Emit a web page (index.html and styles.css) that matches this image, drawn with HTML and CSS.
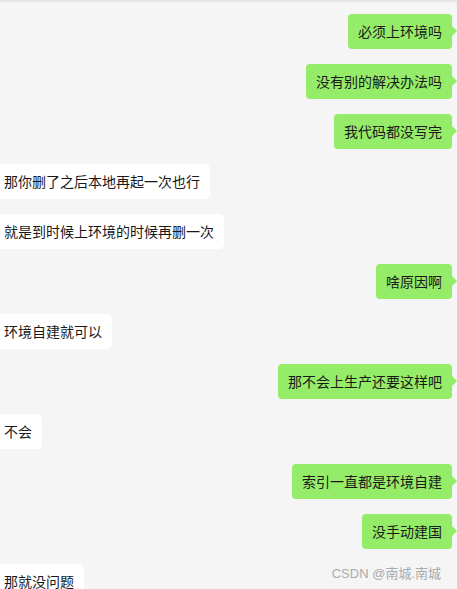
FILE: index.html
```html
<!DOCTYPE html>
<html lang="zh-CN">
<head>
    <meta charset="UTF-8">
    <meta name="viewport" content="width=device-width, initial-scale=1.0">
    <title>聊天记录</title>
    <link rel="stylesheet" href="styles.css">
</head>
<body>
    <div class="chat">
        <div class="msg me"><span class="bubble">必须上环境吗</span></div>
        <div class="msg me"><span class="bubble">没有别的解决办法吗</span></div>
        <div class="msg me"><span class="bubble">我代码都没写完</span></div>
        <div class="msg other"><span class="bubble">那你删了之后本地再起一次也行</span></div>
        <div class="msg other"><span class="bubble">就是到时候上环境的时候再删一次</span></div>
        <div class="msg me"><span class="bubble">啥原因啊</span></div>
        <div class="msg other"><span class="bubble">环境自建就可以</span></div>
        <div class="msg me"><span class="bubble">那不会上生产还要这样吧</span></div>
        <div class="msg other"><span class="bubble">不会</span></div>
        <div class="msg me"><span class="bubble">索引一直都是环境自建</span></div>
        <div class="msg me"><span class="bubble">没手动建国</span></div>
        <div class="msg other"><span class="bubble">那就没问题</span></div>

        <!-- watermark over the bottom of the list -->
        <div class="watermark">CSDN @南城.南城</div>
    </div>
</body>
</html>
```

FILE: styles.css
```css
html, body {
    margin: 0;
    height: 100%;
    overflow: hidden;
}
body {
    background-color: #f5f5f5;
    font-family: "Noto Sans CJK SC", "Noto Sans", sans-serif;
    color: #191919;
}
.chat {
    position: relative;
    height: 100vh;
    box-sizing: border-box;
    border-top: 2px solid #e6e6e6;
    padding-top: 12px;
    display: flex;
    flex-direction: column;
    gap: 15px;
    overflow: hidden;
}
.msg {
    display: flex;
    flex-shrink: 0;
}
.msg.me {
    justify-content: flex-end;
    padding-right: 5px;
}
.msg.other {
    justify-content: flex-start;
    margin-left: -6px;
}
.bubble {
    position: relative;
    display: block;
    height: 35px;
    line-height: 35px;
    padding: 0 10px;
    font-size: 14px;
    border-radius: 4px;
    white-space: nowrap;
}
.me .bubble {
    background-color: #95ec69;
}
.me .bubble::after {
    content: "";
    position: absolute;
    right: -5px;
    top: 12px;
    border-left: 5px solid #95ec69;
    border-top: 5px solid transparent;
    border-bottom: 5px solid transparent;
}
.other .bubble {
    background-color: #ffffff;
    border-radius: 5px;
}
.watermark {
    position: absolute;
    right: 16px;
    bottom: 8px;
    font-family: "Liberation Sans", "Noto Sans CJK SC", sans-serif;
    font-size: 13px;
    line-height: 15px;
    color: #ababab;
}
```
